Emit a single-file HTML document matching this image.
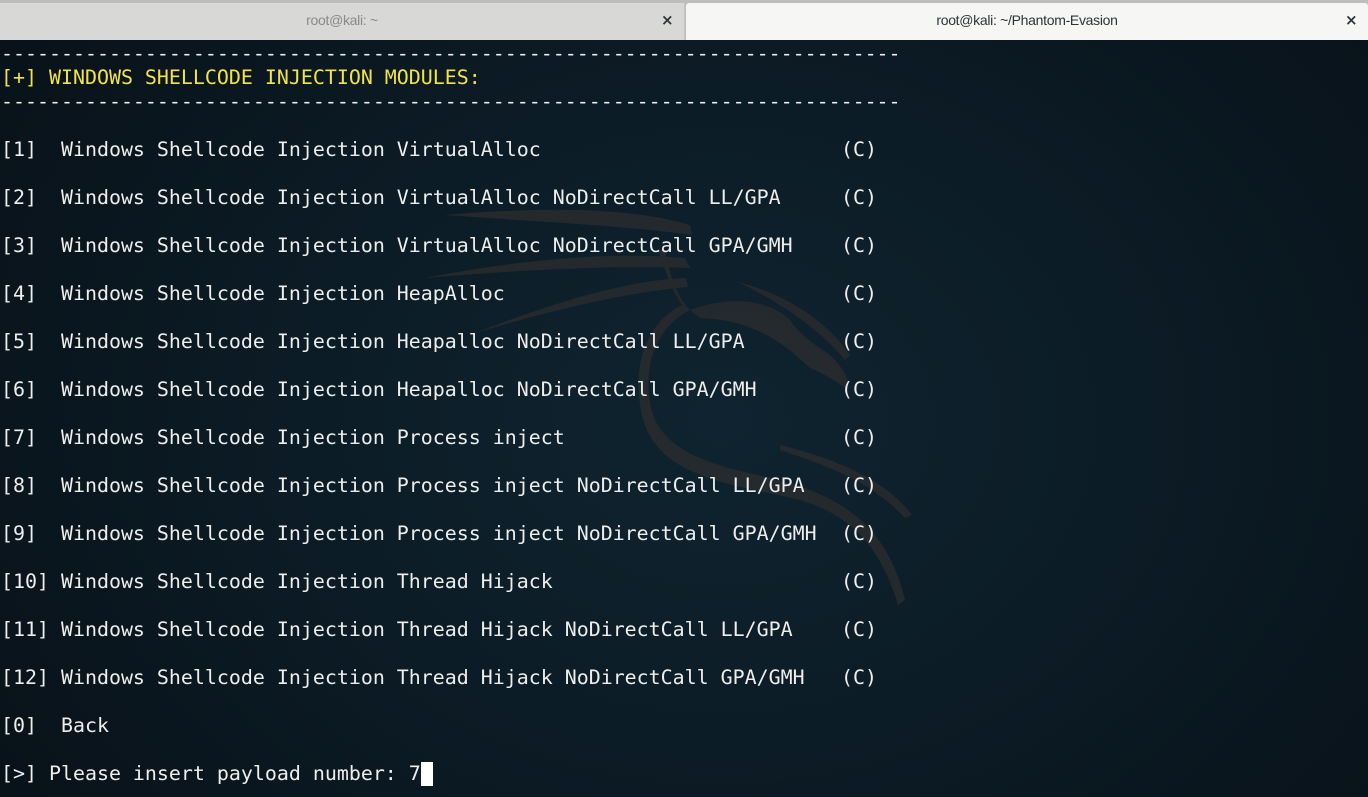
<!DOCTYPE html>
<html><head><style>
*{margin:0;padding:0;box-sizing:border-box}
html,body{width:1368px;height:797px;overflow:hidden;background:#0a141b}
.bar{position:absolute;left:0;top:0;width:1368px;height:40px;background:#bdbdbc}
.tab{position:absolute;top:3px;height:37px;font:14px "Liberation Sans",sans-serif;letter-spacing:-0.3px;line-height:35px;text-align:center}
.t1{left:0;width:685px;background:#d8d8d7;color:#8a8a8a;border-right:1px solid #c4c4c4}
.t2{left:686px;width:682px;background:#f6f6f5;color:#2e3436;border-radius:3px 3px 0 0}
.x{position:absolute;top:0;line-height:35px;font:bold 15px/35px "DejaVu Sans",sans-serif;color:#2e3436}
.term{position:absolute;left:0;top:40px;width:1368px;height:757px;
background:radial-gradient(ellipse 900px 700px at 720px 380px,#0f2430 0%,#0c1c26 45%,#081118 100%)}
svg{position:absolute;left:0;top:0}
pre{position:absolute;top:42px;font:19.93px/24px "DejaVu Sans Mono","Liberation Mono",monospace;color:#eeeeec;white-space:pre}
.y{color:#f3e34a}
.cur{display:inline-block;width:12px;height:24px;background:#fff;vertical-align:top}
</style></head><body>
<div class="bar">
<div class="tab t1">root@kali: ~<span class="x" style="left:661px">×</span></div>
<div class="tab t2">root@kali: ~/Phantom-Evasion<span class="x" style="left:659px">×</span></div>
</div>
<div class="term"></div>
<svg width="1368" height="797" viewBox="0 0 1368 797">
<g fill="#2a2c2e" opacity="0.8">
<path d="M445 215 C560 205 640 210 690 225 L692 235 C620 225 540 222 445 215Z"/>
<path d="M425 278 C530 258 610 252 685 258 L690 268 C610 265 520 270 425 278Z"/>
<path d="M475 333 C560 300 630 280 686 278 L688 287 C630 292 560 308 475 333Z"/>
<path d="M665 250 C670 280 680 300 690 310 C650 330 640 380 655 420 C680 470 760 470 810 490 C860 510 890 540 905 600 L898 605 C880 545 850 515 800 500 C740 485 665 480 645 425 C630 380 640 325 682 305 C672 290 665 270 658 250Z"/>
<path d="M690 310 C730 295 770 300 790 320 C800 335 815 345 830 355 C845 370 850 380 848 390 C835 380 820 372 810 368 C790 350 760 320 700 318Z"/>
<path d="M738 282 C790 295 830 325 850 355 L845 360 C820 330 785 305 738 282Z"/>
<path d="M780 445 C840 460 885 480 912 515 L905 518 C875 485 835 468 780 450Z"/>
</g>
</svg>
<pre style="left:1px">---------------------------------------------------------------------------
<span class="y">[+] WINDOWS SHELLCODE INJECTION MODULES:</span>
---------------------------------------------------------------------------

[1]  Windows Shellcode Injection VirtualAlloc

[2]  Windows Shellcode Injection VirtualAlloc NoDirectCall LL/GPA

[3]  Windows Shellcode Injection VirtualAlloc NoDirectCall GPA/GMH

[4]  Windows Shellcode Injection HeapAlloc

[5]  Windows Shellcode Injection Heapalloc NoDirectCall LL/GPA

[6]  Windows Shellcode Injection Heapalloc NoDirectCall GPA/GMH

[7]  Windows Shellcode Injection Process inject

[8]  Windows Shellcode Injection Process inject NoDirectCall LL/GPA

[9]  Windows Shellcode Injection Process inject NoDirectCall GPA/GMH

[10] Windows Shellcode Injection Thread Hijack

[11] Windows Shellcode Injection Thread Hijack NoDirectCall LL/GPA

[12] Windows Shellcode Injection Thread Hijack NoDirectCall GPA/GMH

[0]  Back

[>] Please insert payload number: 7<span class="cur"></span></pre>
<pre style="left:841px;top:138px">(C)

(C)

(C)

(C)

(C)

(C)

(C)

(C)

(C)

(C)

(C)

(C)</pre>
</body></html>
